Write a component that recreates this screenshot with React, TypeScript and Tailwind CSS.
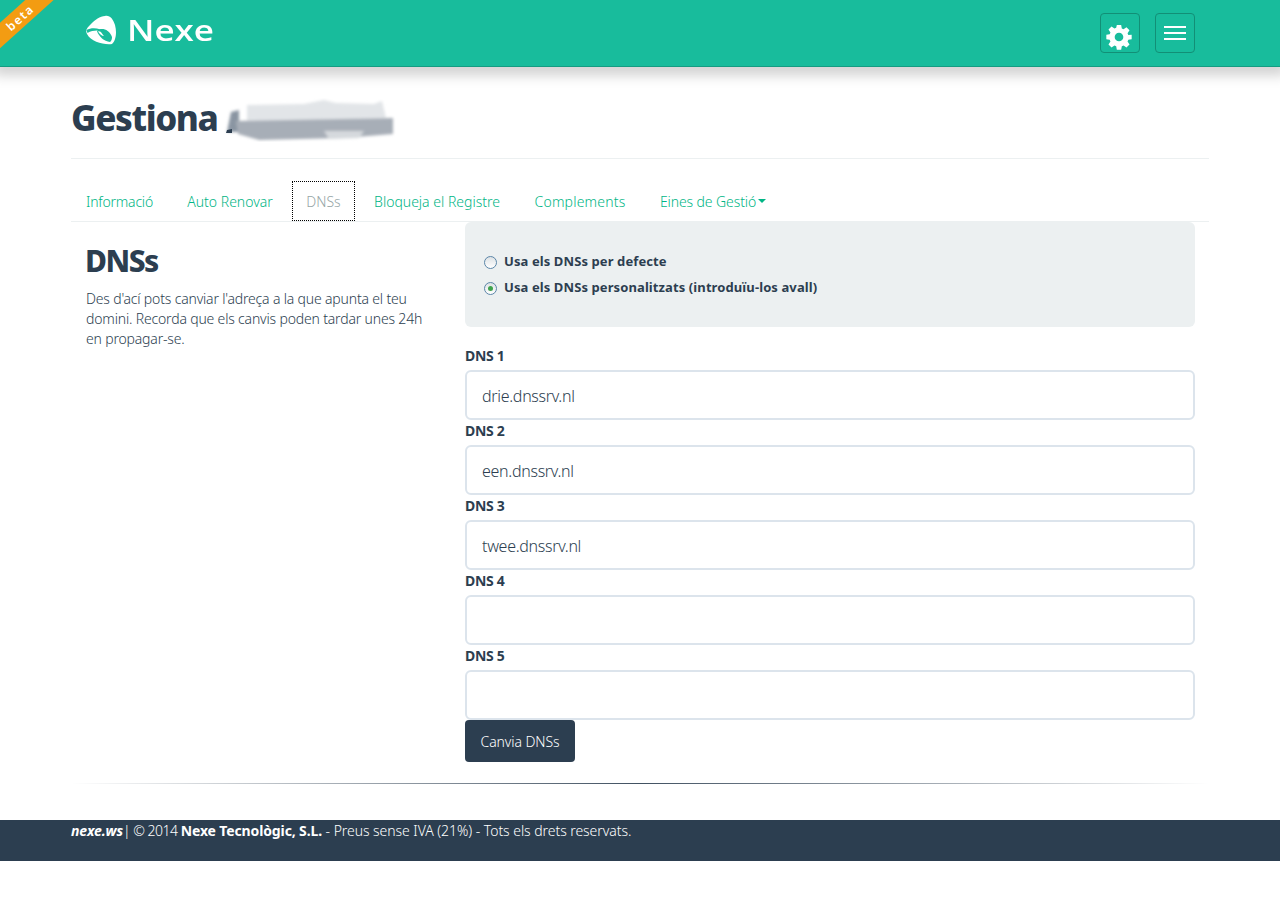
const body = { fontFamily: '"Noto Sans", "Open Sans", sans-serif' };

function Logo() {
  return (
    <div className="flex items-center">
      <svg width="31" height="30" viewBox="0 0 31 30" className="shrink-0">
        <path d="M19 1 C24 0 27 4 29 10 C31 17 30 26 26 29 C18 30 5 27 1 19 C-1 15 1 13 5 9 C9 5 14 1 19 1 Z" fill="#fff" />
        <path d="M0.5 15 C6 12 14 13 19 17 C13 15 7 15 1.5 18 Z" fill="#18bc9c" />
        <path d="M11 16 C15 12 23 14 26 22 C26 25 25 26 24 27 C18 26 13 22 11 16 Z" fill="#18bc9c" />
        <path d="M12 16.5 C15 15.5 16 19 18 21 C16 21 13.5 19 12 16.5 Z" fill="#fff" />
      </svg>
      <span className="ml-[10px] origin-left scale-x-[1.25] text-[28px] leading-none font-semibold text-white" style={{ fontFamily: '"Open Sans", sans-serif' }}>Nexe</span>
    </div>
  );
}

function Smear() {
  return (
    <svg width="172" height="44" viewBox="0 0 172 44" className="shrink-0">
      <defs>
        <filter id="sm" x="-10%" y="-30%" width="120%" height="160%">
          <feGaussianBlur stdDeviation="1.8" />
        </filter>
      </defs>
      <g filter="url(#sm)">
        <path d="M23 7 L80 6 L100 2 L112 5 L150 6 L158 3 L162 20 L23 24 Z" fill="#e2e5e8" />
        <path d="M3 34 L7 14 L15 12 L15 34 Z" fill="#8a95a2" />
        <path d="M12 23 L169 20 L169 36 L120 40 L35 42 L14 36 Z" fill="#a7aeb7" />
        <path d="M100 33 L140 33 L135 40 L105 41 Z" fill="#d5d9dd" />
      </g>
      <path d="M3 32 L8 31 L8 35 L2 35 Z" fill="#2c3e50" />
    </svg>
  );
}

function Field({ label, value }: { label: string; value: string }) {
  return (
    <div>
      <label className="block h-[25px] pt-[1px] text-[14px] leading-[20px] font-bold tracking-[-0.3px] text-[#2c3e50]">{label}</label>
      <input readOnly value={value} className="block h-[50px] w-full rounded-md border-2 border-[#dce4ec] px-[15px] pt-[2px] text-[16px] font-[350] tracking-[-0.3px] text-[#2c3e50] outline-none" />
    </div>
  );
}

function Radio({ checked, label }: { checked?: boolean; label: string }) {
  return (
    <div className="flex h-[26px] items-center gap-[7px]">
      <span className="flex h-[13px] w-[13px] items-center justify-center rounded-full border border-[#5b86a8] bg-[linear-gradient(#dde2e5,#fff)]">
        {checked && <span className="h-[5px] w-[5px] rounded-full bg-[#3fa34d]" />}
      </span>
      <span className="text-[13px] font-bold tracking-[0.1px] text-[#2c3e50]">{label}</span>
    </div>
  );
}

const tabs: [string, string, string][] = [
  ["Informació", "w-[97px]", "tracking-[-0.2px]"],
  ["Auto Renovar", "w-[116px]", ""],
  ["DNSs", "w-[63px]", ""],
  ["Bloqueja el Registre", "w-[156px]", ""],
  ["Complements", "w-[122px]", "tracking-[0.2px]"],
];

export default function App() {
  return (
    <div className="min-h-[899px] bg-white text-[#2c3e50]" style={body}>
      <header className="relative h-[67px] overflow-hidden border-b border-[#149c82] bg-[#18bc9c]">
        <div className="flex h-full items-start justify-between pl-[86px] pr-[85px]">
          <div className="pt-[15px]"><Logo /></div>
          <div className="flex gap-[15px] pt-[13px]">
            <button className="flex h-10 w-10 items-center justify-center rounded border border-[#128f76]">
              <svg width="26" height="26" viewBox="0 0 24 24" className="mr-[2px] mt-[7px]">
                <path fill="#fff" fillRule="evenodd" d="M10 1h4l.6 3.1 1.6.7 2.7-1.8 2.8 2.8-1.8 2.7.7 1.6L23.7 10v4l-3.1.6-.7 1.6 1.8 2.7-2.8 2.8-2.7-1.8-1.6.7L14 23.7h-4l-.6-3.1-1.6-.7-2.7 1.8-2.8-2.8 1.8-2.7-.7-1.6L.3 14v-4l3.1-.6.7-1.6L2.3 5.1l2.8-2.8 2.7 1.8 1.6-.7zM12 8a4 4 0 1 0 0 8 4 4 0 0 0 0-8z" />
              </svg>
            </button>
            <button className="flex h-10 w-10 flex-col items-center justify-center gap-1 rounded border border-[#128f76]">
              <span className="h-0.5 w-[22px] bg-white" />
              <span className="h-0.5 w-[22px] bg-white" />
              <span className="h-0.5 w-[22px] bg-white" />
            </button>
          </div>
        </div>
        <div className="absolute left-[-35px] top-[8px] flex h-[19px] w-[110px] rotate-[-42deg] items-center justify-center bg-[#f39c12] text-[12px] font-semibold tracking-[1.5px] text-white">beta</div>
      </header>
      <div className="pointer-events-none h-0 shadow-[0_0_14px_7px_rgba(0,0,0,0.22)]" />

      <main className="mx-auto w-[1138px]">
        <div className="flex h-[92px] items-end border-b border-[#ecf0f1] pb-[18px]">
          <h1 className="text-[35px] font-extrabold leading-[44px] tracking-[-1.4px] text-[#2c3e50]">Gestiona</h1>
          <div className="ml-[7px] translate-y-[2px]"><Smear /></div>
        </div>

        <nav className="mt-[22px] flex h-[41px] border-b border-[#ecf0f1] text-[14px] font-[350] text-[#00b585]">
          {tabs.map(([t, w, k]) =>
            t === "DNSs" ? (
              <div key={t} className={`mr-1 flex h-10 items-center justify-center border border-dotted border-black text-[#95a5a6] ${w} ${k}`}>{t}</div>
            ) : (
              <div key={t} className={`mr-1 flex h-10 items-center justify-center ${w} ${k}`}>{t}</div>
            )
          )}
          <div className="flex h-10 w-[136px] items-center justify-center tracking-[-0.1px]">
            Eines de Gestió
            <span className="ml-[2px] h-0 w-0 border-x-4 border-t-4 border-x-transparent border-t-[#00b585]" />
          </div>
        </nav>

        <div className="flex">
          <div className="w-[379px] px-[15px]">
            <h2 className="ml-[-1px] mt-[19px] text-[30px] font-extrabold leading-[40px] tracking-[-1.5px] text-[#2c3e50]">DNSs</h2>
            <p className="mt-[8px] text-[14px] font-[350] leading-[20px] tracking-[-0.17px] text-[#2c3e50]">Des d'ací pots canviar l'adreça a la que apunta el teu domini. Recorda que els canvis poden tardar unes 24h en propagar-se.</p>
          </div>
          <div className="w-[759px] pl-[15px] pr-[14px]">
            <div className="h-[105px] rounded-md bg-[#ecf0f1] px-[19px] pt-[27px]">
              <Radio label="Usa els DNSs per defecte" />
              <Radio checked label="Usa els DNSs personalitzats (introduïu-los avall)" />
            </div>
            <div className="mt-[18px]">
              <Field label="DNS 1" value="drie.dnssrv.nl" />
              <Field label="DNS 2" value="een.dnssrv.nl" />
              <Field label="DNS 3" value="twee.dnssrv.nl" />
              <Field label="DNS 4" value="" />
              <Field label="DNS 5" value="" />
            </div>
            <button className="block h-[42px] w-[110px] rounded bg-[#2c3e50] text-[14px] font-[350] tracking-[-0.1px] text-white">Canvia DNSs</button>
          </div>
        </div>

        <div className="mt-[21px] h-px bg-[linear-gradient(to_right,rgba(44,62,80,0),rgba(44,62,80,0.9)_50%,rgba(44,62,80,0))]" />
      </main>

      <footer className="mt-[36px] h-[41px] bg-[#2c3e50] text-[14px] leading-[22px] font-[350] tracking-[-0.05px] text-white">
        <div className="mx-auto w-[1138px]">
          <b className="font-bold italic tracking-[-0.13px]">nexe.ws</b><span className="tracking-[-0.5px]">| © 2014 </span><b className="font-bold tracking-[-0.13px]">Nexe Tecnològic, S.L.</b> - Preus sense IVA (21%) - Tots els drets reservats.
        </div>
      </footer>
    </div>
  );
}
